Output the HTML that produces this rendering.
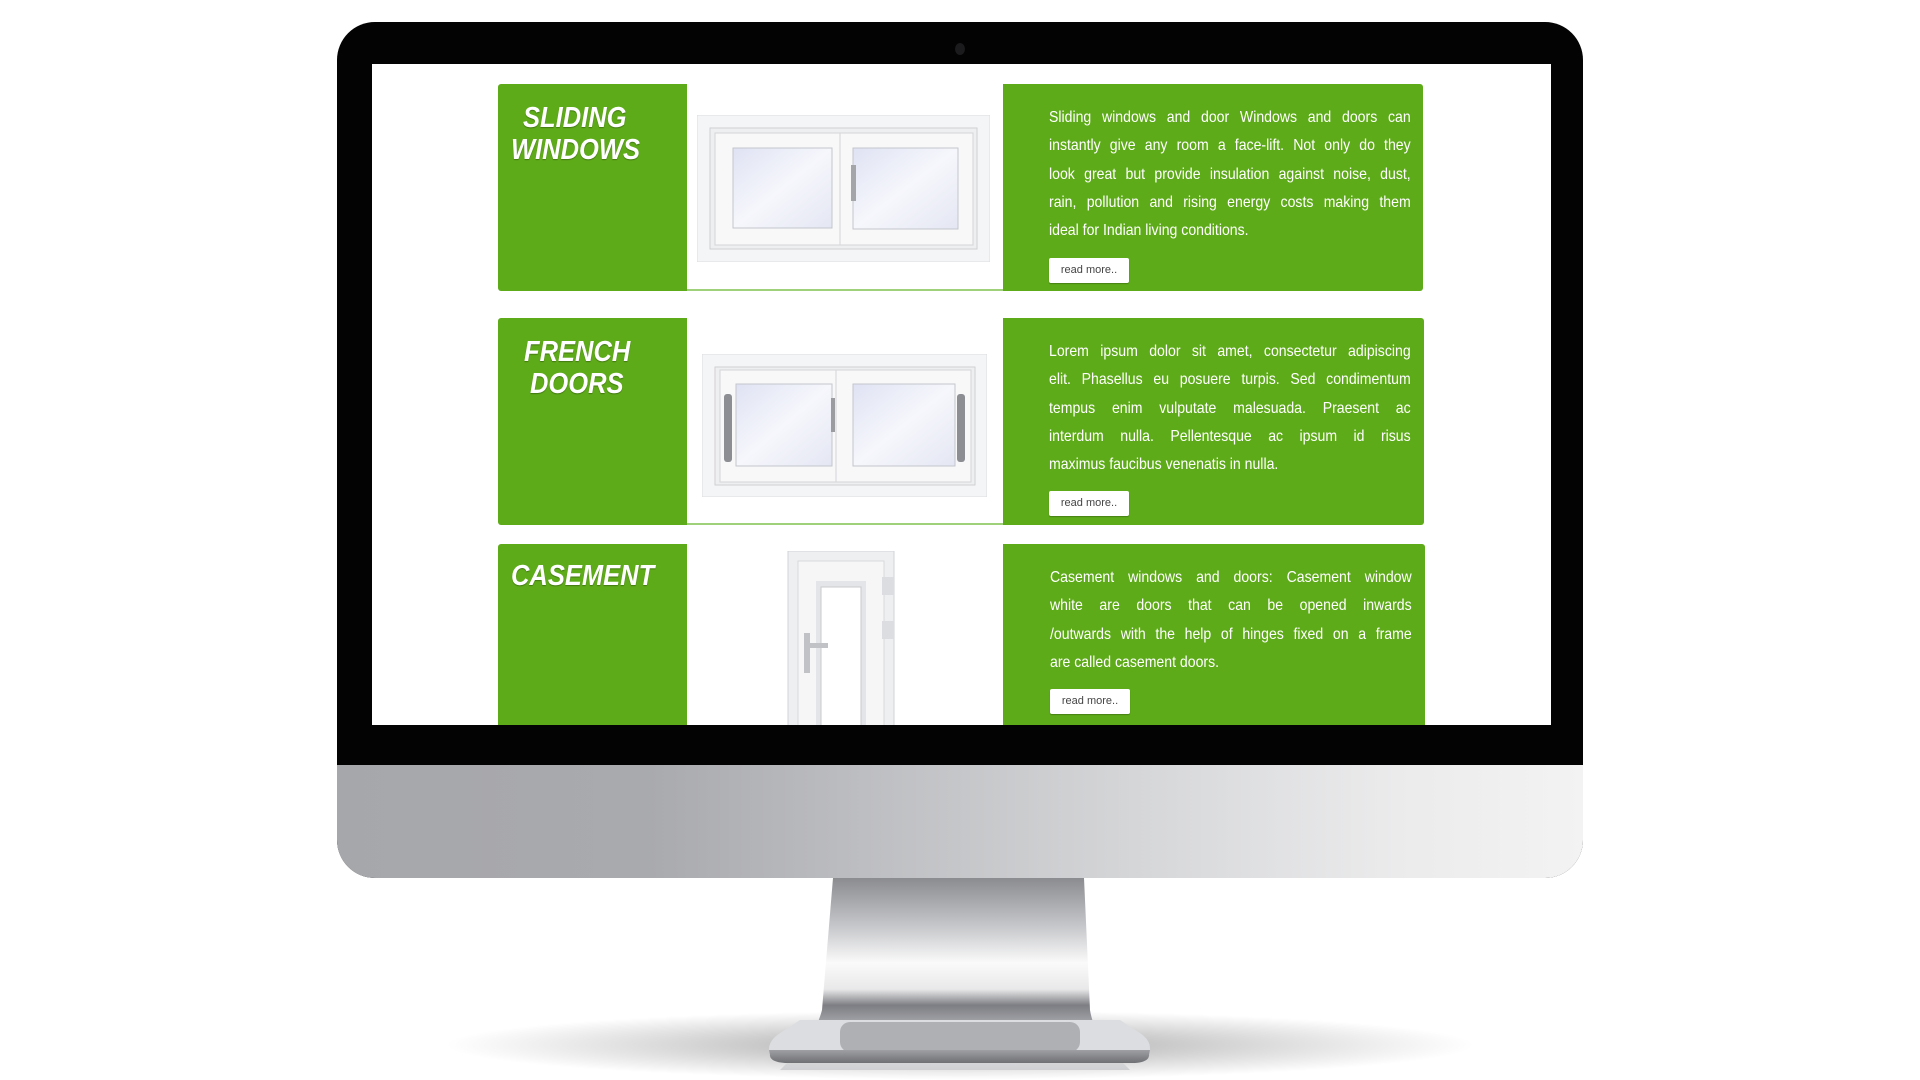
<!DOCTYPE html>
<html><head><meta charset="utf-8"><style>
*{margin:0;padding:0;box-sizing:border-box}
body{width:1920px;height:1080px;background:#fff;position:relative;overflow:hidden;font-family:"Liberation Sans",sans-serif}
.abs{position:absolute}
.g{background:#5eab19}
.txt{position:absolute;color:#fff;font-size:16px;width:411px;transform:scaleX(0.88);transform-origin:0 0}
.txt div{height:28.3px;line-height:28.3px;text-align:justify;text-align-last:justify;white-space:nowrap}
.txt div.l{text-align-last:left}
.btn{position:absolute;width:80px;height:25px;background:#fff;border-radius:2px;color:#444;font-size:11px;line-height:25px;text-align:center;box-shadow:0 1px 1px rgba(0,0,0,.25)}
.t{position:absolute;color:#fff;font-weight:bold;font-style:italic;font-size:29px;line-height:32px;transform:scaleX(0.88);transform-origin:0 0;text-shadow:0 1px 1px rgba(0,0,0,.3)}
</style></head><body>
<div class="abs" style="left:440px;top:1010px;width:1040px;height:70px;border-radius:50%;background:radial-gradient(ellipse at center,rgba(0,0,0,.35),rgba(0,0,0,.12) 45%,rgba(0,0,0,0) 70%)"></div>
<svg class="abs" style="left:760px;top:870px" width="400" height="200">
<defs><linearGradient id="nk" x1="0" y1="0" x2="0" y2="1">
<stop offset="0" stop-color="#8b8c90"/><stop offset=".25" stop-color="#c9cacd"/><stop offset=".42" stop-color="#fafafa"/><stop offset=".55" stop-color="#e9e9ea"/><stop offset=".63" stop-color="#7d7e83"/><stop offset=".75" stop-color="#b3b4b8"/><stop offset=".85" stop-color="#dedfe1"/><stop offset="1" stop-color="#c8c9cc"/></linearGradient>
<linearGradient id="bs" x1="0" y1="0" x2="0" y2="1"><stop offset="0" stop-color="#9fa0a4"/><stop offset="1" stop-color="#6f7074"/></linearGradient></defs>
<path d="M73 8 L324 8 L330 140 Q333 160 350 180 L380 210 L10 210 L40 180 Q57 160 62 140 Z" fill="url(#nk)"/>
<path d="M9 178 Q10 168 25 160 L40 150 L360 150 L375 160 Q390 168 390 178 L390 185 L9 185 Z" fill="#dcdde0"/>
<rect x="80" y="152" width="240" height="30" rx="10" fill="#a4a5a9" opacity=".8"/>
<path d="M9 180 L390 180 L389 186 Q388 192 375 193 L25 193 Q11 192 10 186 Z" fill="url(#bs)"/>
</svg>
<div class="abs" style="left:337px;top:22px;width:1246px;height:856px;border-radius:38px;overflow:hidden;background:#030303">
 <div class="abs" style="left:0;top:743px;width:1246px;height:113px;background:linear-gradient(90deg,#a6a7ab 0%,#a9aaae 25%,#c0c1c4 45%,#d6d7d9 65%,#ebebec 85%,#f3f3f3 100%)"></div>
</div>
<div class="abs" style="left:955px;top:43px;width:10px;height:12px;border-radius:50%;background:#1b1b1d"></div>
<div class="abs" style="left:372px;top:64px;width:1179px;height:661px;background:#fff;overflow:hidden">
 <div class="abs g" style="left:126px;top:20px;width:189px;height:207px;border-radius:3px 0 0 3px"></div>
 <div class="abs g" style="left:631px;top:20px;width:420px;height:207px;border-radius:0 3px 3px 0"></div>
 <div class="abs" style="left:315px;top:225px;width:316px;height:2px;background:#9fd07a"></div>
 <div class="abs g" style="left:126px;top:254px;width:189px;height:207px;border-radius:3px 0 0 3px"></div>
 <div class="abs g" style="left:631px;top:254px;width:421px;height:207px;border-radius:0 3px 3px 0"></div>
 <div class="abs" style="left:315px;top:459px;width:316px;height:2px;background:#9fd07a"></div>
 <div class="abs g" style="left:126px;top:480px;width:189px;height:200px;border-radius:3px 0 0 0"></div>
 <div class="abs g" style="left:631px;top:480px;width:422px;height:200px;border-radius:0 3px 0 0"></div>

 <div class="t" style="left:151px;top:38px">SLIDING</div>
 <div class="t" style="left:139px;top:70px">WINDOWS</div>
 <div class="t" style="left:152px;top:272px">FRENCH</div>
 <div class="t" style="left:158px;top:304px">DOORS</div>
 <div class="t" style="left:139px;top:496px">CASEMENT</div>

 <svg class="abs" style="left:325px;top:51px" width="293" height="147">
  <defs><linearGradient id="gl" x1="0" y1="0" x2="1" y2="1"><stop offset="0" stop-color="#dfe2f3"/><stop offset=".5" stop-color="#f6f7fc"/><stop offset="1" stop-color="#e4e6f3"/></linearGradient></defs>
  <rect x="0" y="0" width="293" height="147" fill="#f4f5f6" stroke="#dcdde0"/>
  <rect x="13" y="13" width="267" height="121" fill="#eeeff1" stroke="#cfd0d4"/>
  <rect x="18" y="18" width="125" height="112" fill="#f8f8f9" stroke="#d4d5d8"/>
  <rect x="36" y="33" width="99" height="80" fill="url(#gl)" stroke="#c4c6cc"/>
  <rect x="143" y="18" width="133" height="112" fill="#f8f8f9" stroke="#d4d5d8"/>
  <rect x="156" y="33" width="105" height="81" fill="url(#gl)" stroke="#c4c6cc"/>
  <rect x="154" y="50" width="5" height="36" fill="#a4a5a8"/>
 </svg>
 <svg class="abs" style="left:330px;top:290px" width="285" height="143">
  <rect x="0" y="0" width="285" height="143" fill="#f4f5f6" stroke="#dcdde0"/>
  <rect x="13" y="13" width="260" height="118" fill="#eeeff1" stroke="#cfd0d4"/>
  <rect x="18" y="16" width="116" height="112" fill="#f8f8f9" stroke="#d4d5d8"/>
  <rect x="34" y="30" width="96" height="82" fill="url(#gl)" stroke="#c4c6cc"/>
  <rect x="134" y="16" width="135" height="112" fill="#f8f8f9" stroke="#d4d5d8"/>
  <rect x="151" y="30" width="102" height="82" fill="url(#gl)" stroke="#c4c6cc"/>
  <rect x="22" y="40" width="8" height="68" rx="3" fill="#8c8e93"/>
  <rect x="255" y="40" width="8" height="68" rx="3" fill="#8c8e93"/>
  <rect x="129" y="44" width="4" height="34" fill="#9a9ca0"/>
 </svg>
 <svg class="abs" style="left:414px;top:487px" width="112" height="180">
  <rect x="2" y="0" width="106" height="180" fill="#eeeff1" stroke="#d2d3d6"/>
  <rect x="12" y="10" width="86" height="170" fill="#f6f6f7" stroke="#d8d9dc"/>
  <rect x="30" y="30" width="50" height="150" fill="#e4e5e8"/>
  <rect x="35" y="36" width="40" height="144" fill="#ffffff" stroke="#c9cacd"/>
  <rect x="96" y="26" width="12" height="18" fill="#dcdde0"/>
  <rect x="96" y="70" width="12" height="18" fill="#dcdde0"/>
  <rect x="18" y="82" width="6" height="40" fill="#c1c2c6"/>
  <rect x="18" y="92" width="24" height="5" fill="#c1c2c6"/>
 </svg>

 <div class="txt" style="left:677px;top:40px">
  <div>Sliding windows and door Windows and doors can</div>
  <div>instantly give any room a face-lift. Not only do they</div>
  <div>look great but provide insulation against noise, dust,</div>
  <div>rain, pollution and rising energy costs making them</div>
  <div class="l">ideal for Indian living conditions.</div>
 </div>
 <div class="btn" style="left:677px;top:194px">read more..</div>

 <div class="txt" style="left:677px;top:274px">
  <div>Lorem ipsum dolor sit amet, consectetur adipiscing</div>
  <div>elit. Phasellus eu posuere turpis. Sed condimentum</div>
  <div>tempus enim vulputate malesuada. Praesent ac</div>
  <div>interdum nulla. Pellentesque ac ipsum id risus</div>
  <div class="l">maximus faucibus venenatis in nulla.</div>
 </div>
 <div class="btn" style="left:677px;top:427px">read more..</div>

 <div class="txt" style="left:678px;top:500px">
  <div>Casement windows and doors: Casement window</div>
  <div>white are doors that can be opened inwards</div>
  <div>/outwards with the help of hinges fixed on a frame</div>
  <div class="l">are called casement doors.</div>
 </div>
 <div class="btn" style="left:678px;top:625px">read more..</div>
</div>
</body></html>
